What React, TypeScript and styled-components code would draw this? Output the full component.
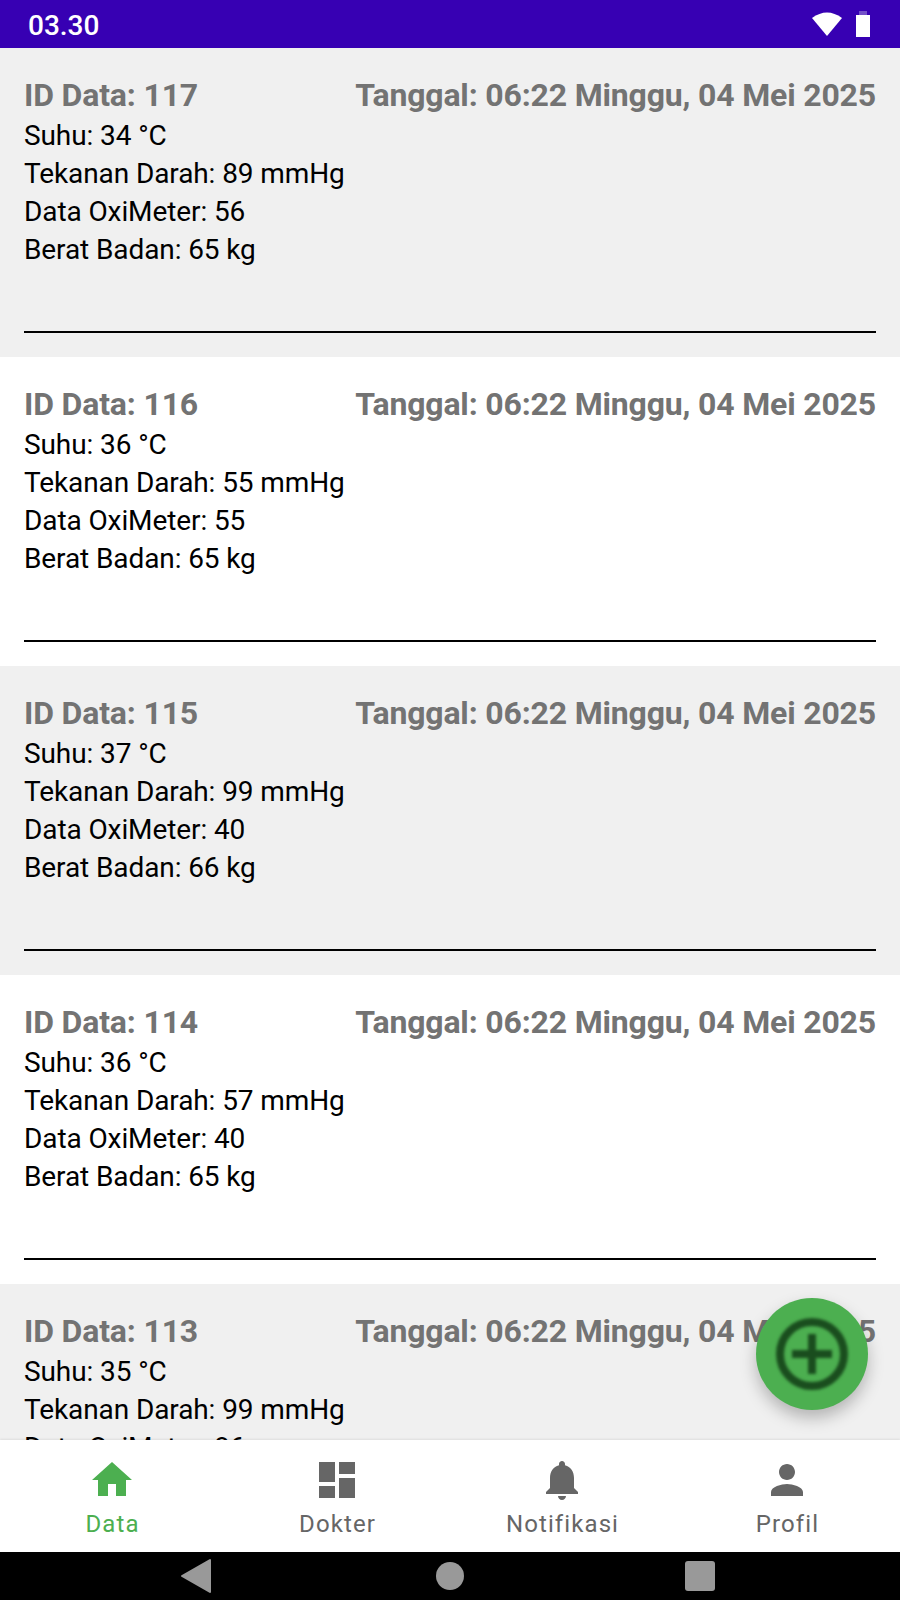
import styled, { createGlobalStyle } from 'styled-components';

const GlobalStyle = createGlobalStyle`
  html, body {
    margin: 0;
    padding: 0;
    background: #fff;
    font-family: Roboto, "Liberation Sans", sans-serif;
  }
`;

const Screen = styled.div`
  position: relative;
  display: flex;
  flex-direction: column;
  width: 900px;
  height: 1600px;
  overflow: hidden;
`;

const StatusBar = styled.div`
  display: flex;
  align-items: center;
  justify-content: space-between;
  flex: 0 0 48px;
  padding: 2px 30px 0 28px;
  box-sizing: border-box;
  background: #3700b3;
  color: #fff;
  font-size: 28px;
  font-weight: 500;
`;

const StatusIcons = styled.div`
  display: flex;
  align-items: center;
  gap: 13px;
  margin-top: -2px;
`;

const List = styled.div`
  flex: 1;
  min-height: 0;
  overflow: hidden;
`;

const Row = styled.div<{ $shaded: boolean }>`
  display: flex;
  flex-direction: column;
  height: 309px;
  box-sizing: border-box;
  padding: 25px 24px 0;
  background: ${(props) => (props.$shaded ? '#f0f0f0' : '#fff')};
`;

const RowHead = styled.div`
  display: flex;
  justify-content: space-between;
  font-size: 32px;
  font-weight: 700;
  line-height: 44px;
  letter-spacing: -0.17px;
  color: #737373;
`;

const Field = styled.div`
  font-size: 28px;
  line-height: 38px;
  letter-spacing: -0.1px;
  color: #000;
`;

const Divider = styled.div`
  height: 2px;
  margin-top: 62px;
  background: #000;
`;

const Fab = styled.button`
  position: absolute;
  right: 32px;
  bottom: 190px;
  z-index: 2;
  display: flex;
  align-items: center;
  justify-content: center;
  width: 112px;
  height: 112px;
  padding: 0;
  border: 0;
  border-radius: 50%;
  background: #4caf50;
  box-shadow: 0 8px 16px rgba(0, 0, 0, 0.25);
`;

const FabIcon = styled.svg`
  width: 76px;
  height: 76px;
  filter: blur(1.6px);
`;

const BottomNav = styled.div`
  position: relative;
  display: grid;
  grid-template-columns: repeat(4, 1fr);
  flex: 0 0 112px;
  box-sizing: border-box;
  background: #fff;
  box-shadow: 0 -1px 2px rgba(0, 0, 0, 0.08);
`;

const Tab = styled.div<{ $active?: boolean }>`
  display: flex;
  flex-direction: column;
  align-items: center;
  padding-top: 16px;
  color: ${(props) => (props.$active ? '#4caf50' : '#666')};
`;

const TabIcon = styled.svg`
  width: 48px;
  height: 48px;
  margin-left: -1px;
  fill: currentColor;
`;

const TabLabel = styled.span`
  margin-top: 6px;
  font-size: 24px;
  line-height: 28px;
  letter-spacing: 1.1px;
`;

const SystemBar = styled.div`
  position: relative;
  display: flex;
  align-items: center;
  flex: 0 0 48px;
  background: #000;
`;

const SystemIcons = styled.svg`
  width: 900px;
  height: 48px;
  fill: #999;
`;

const records = [
  { id: 117, suhu: 34, tekanan: 89, oxi: 56, berat: 65 },
  { id: 116, suhu: 36, tekanan: 55, oxi: 55, berat: 65 },
  { id: 115, suhu: 37, tekanan: 99, oxi: 40, berat: 66 },
  { id: 114, suhu: 36, tekanan: 57, oxi: 40, berat: 65 },
  { id: 113, suhu: 35, tekanan: 99, oxi: 86, berat: 65 },
];

const tabs = [
  { label: 'Data', d: 'M10 20v-6h4v6h5v-8h3L12 3 2 12h3v8z' },
  { label: 'Dokter', d: 'M3 13h8V3H3v10zm0 8h8v-6H3v6zm10 0h8V11h-8v10zm0-18v6h8V3h-8z' },
  {
    label: 'Notifikasi',
    d: 'M12 22c1.1 0 2-.9 2-2h-4c0 1.1.89 2 2 2zm6-6v-5c0-3.07-1.64-5.64-4.5-6.32V4c0-.83-.67-1.5-1.5-1.5s-1.5.67-1.5 1.5v.68C7.63 5.36 6 7.92 6 11v5l-2 2v1h16v-1l-2-2z',
  },
  {
    label: 'Profil',
    d: 'M12 12c2.21 0 4-1.79 4-4s-1.79-4-4-4-4 1.79-4 4 1.79 4 4 4zm0 2c-2.67 0-8 1.34-8 4v2h16v-2c0-2.66-5.33-4-8-4z',
  },
];

export default function App() {
  return (
    <Screen>
      <GlobalStyle />
      <StatusBar>
        <span>03.30</span>
        <StatusIcons>
          <svg width="32" height="26" viewBox="0 0 32 26">
            <path d="M16 25 L1 7 Q16 -4 31 7 Z" fill="#fff" />
          </svg>
          <svg width="14" height="26" viewBox="0 0 14 26">
            <rect x="3" y="0" width="8" height="5" fill="#7350c8" />
            <rect x="0" y="4" width="14" height="22" fill="#fff" />
          </svg>
        </StatusIcons>
      </StatusBar>
      <List>
        {records.map((r, i) => (
          <Row key={r.id} $shaded={i % 2 === 0}>
            <RowHead>
              <span>ID Data: {r.id}</span>
              <span>Tanggal: 06:22 Minggu, 04 Mei 2025</span>
            </RowHead>
            <Field>Suhu: {r.suhu} °C</Field>
            <Field>Tekanan Darah: {r.tekanan} mmHg</Field>
            <Field>Data OxiMeter: {r.oxi}</Field>
            <Field>Berat Badan: {r.berat} kg</Field>
            <Divider />
          </Row>
        ))}
      </List>
      <BottomNav>
        {tabs.map((t, i) => (
          <Tab key={t.label} $active={i === 0}>
            <TabIcon viewBox="0 0 24 24">
              <path d={t.d} />
            </TabIcon>
            <TabLabel>{t.label}</TabLabel>
          </Tab>
        ))}
      </BottomNav>
      <SystemBar>
        <SystemIcons viewBox="0 0 900 48">
          <path d="M210 8 V40 L182 24 Z" stroke="#999" strokeWidth="2" strokeLinejoin="round" />
          <circle cx="450" cy="24" r="14" />
          <rect x="685" y="9" width="30" height="30" rx="3" />
        </SystemIcons>
      </SystemBar>
      <Fab>
        <FabIcon viewBox="0 0 76 76" fill="none" stroke="#1a4d1e" strokeWidth="8">
          <circle cx="38" cy="38" r="32" />
          <path d="M38 18 V58 M18 38 H58" />
        </FabIcon>
      </Fab>
    </Screen>
  );
}
